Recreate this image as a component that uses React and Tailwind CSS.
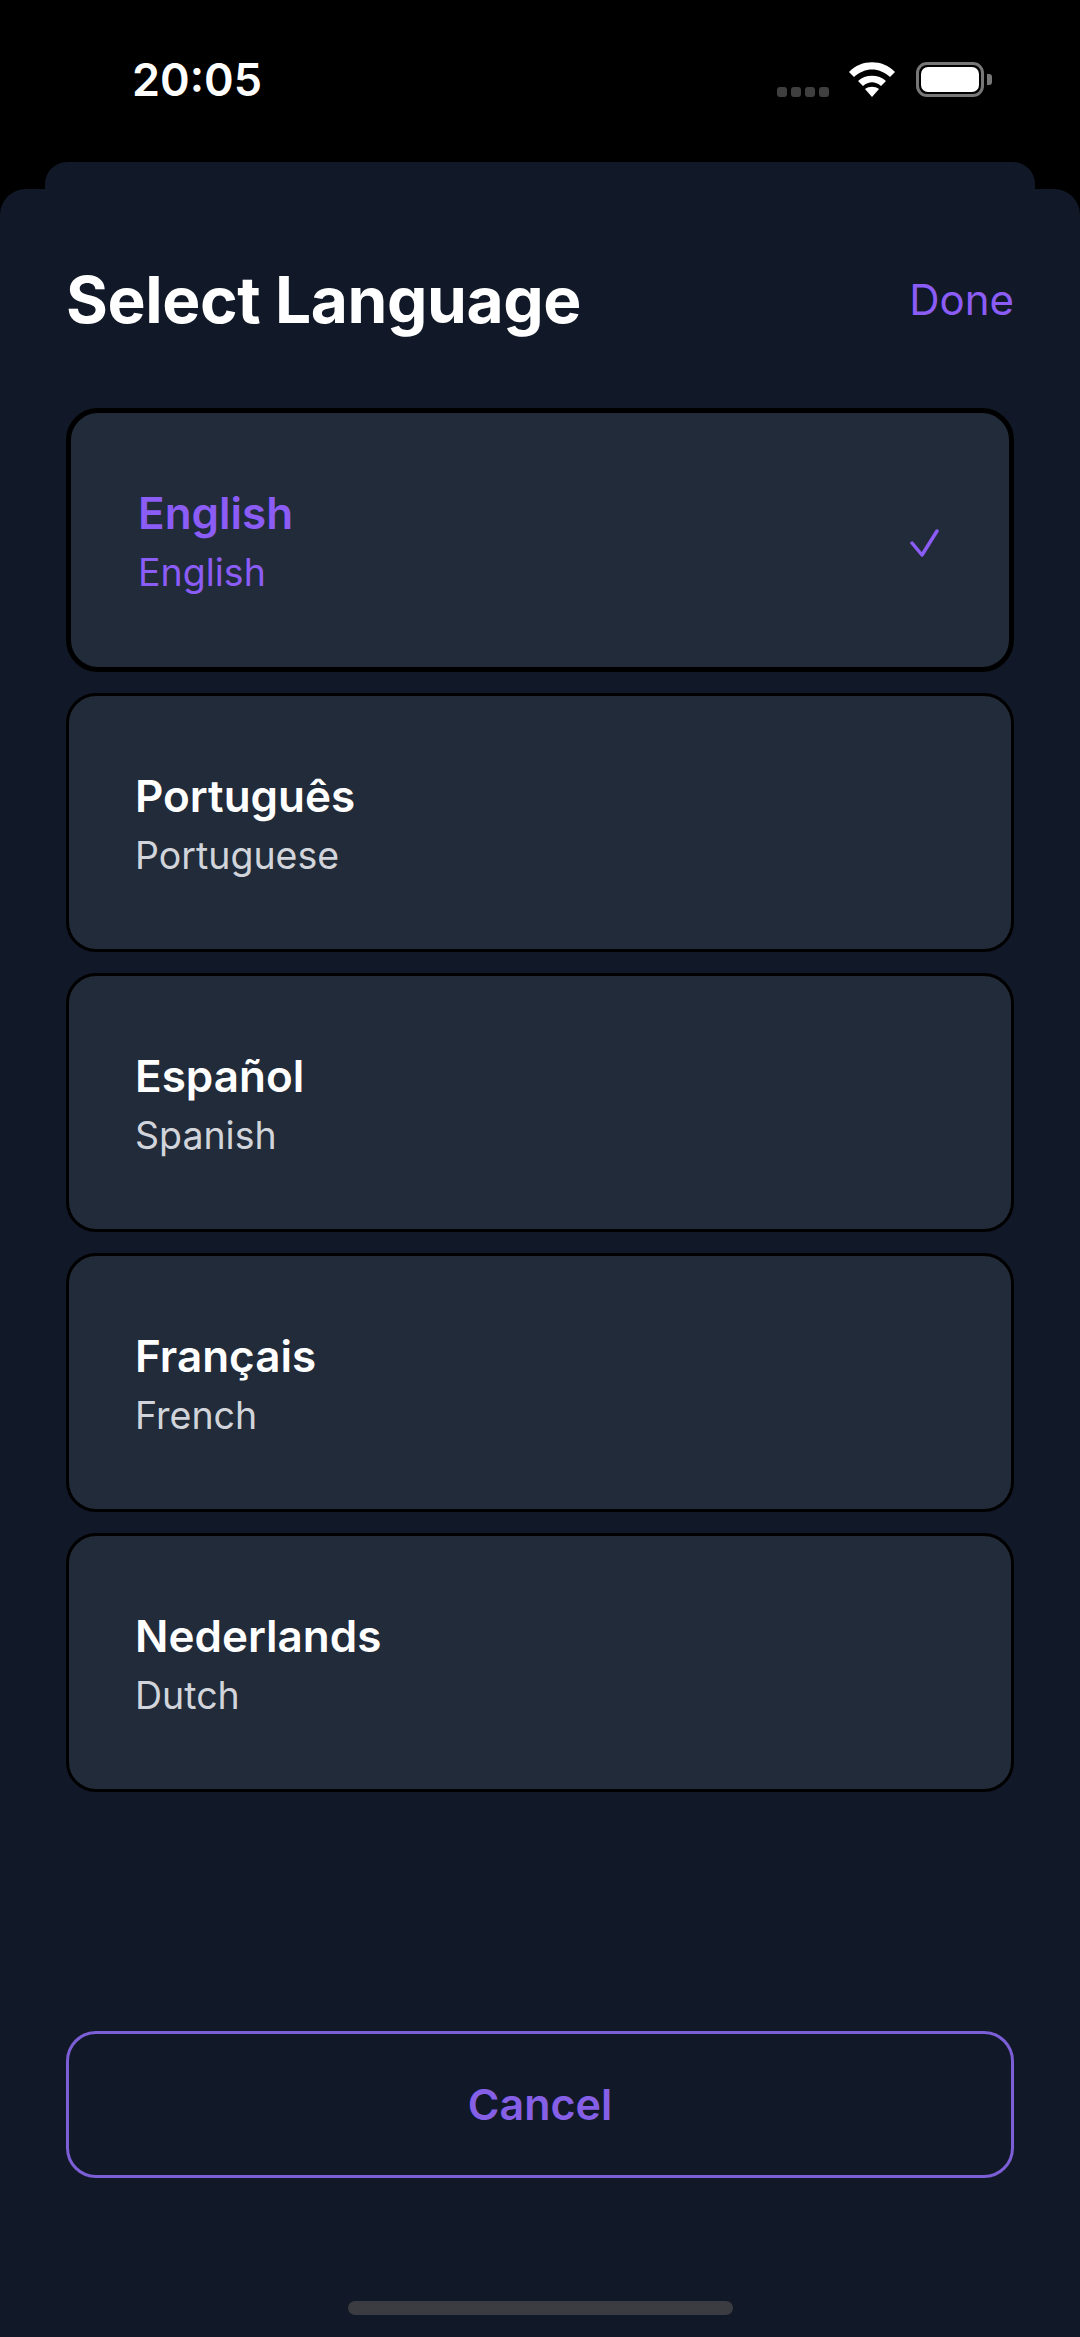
const LANGUAGES = [
  { name: "Português", sub: "Portuguese" },
  { name: "Español", sub: "Spanish" },
  { name: "Français", sub: "French" },
  { name: "Nederlands", sub: "Dutch" },
];

function StatusBar() {
  return (
    <div className="h-[162px] shrink-0 flex items-start justify-between pl-[132px] pr-[88px] pt-[55px]">
      <span className="text-[45px] leading-[50px] font-semibold text-white">20:05</span>
      <div className="flex items-end mt-[7px]">
        <div className="flex gap-[4px] mr-[20px]">
          <div className="w-[10px] h-[10px] rounded-[3px] bg-[#3f3f3f]"></div>
          <div className="w-[10px] h-[10px] rounded-[3px] bg-[#3f3f3f]"></div>
          <div className="w-[10px] h-[10px] rounded-[3px] bg-[#3f3f3f]"></div>
          <div className="w-[10px] h-[10px] rounded-[3px] bg-[#3f3f3f]"></div>
        </div>
        <svg width="46" height="35" viewBox="0 0 46 35" className="mr-[21px]">
          <path d="M0 10 C12 -3 34 -3 46 10 L41 15 C30 5 16 5 5 15 Z" fill="#fff" />
          <path d="M9 19 C16 12 30 12 37 19 L32 24 C26 19 20 19 14 24 Z" fill="#fff" />
          <path d="M16 27 C20 24 26 24 30 27 L23 35 Z" fill="#fff" />
        </svg>
        <div className="w-[68px] h-[35px] rounded-[11px] border-[3px] border-[#777] p-[2px]">
          <div className="w-full h-full rounded-[7px] bg-white"></div>
        </div>
        <div className="w-[5px] h-[11px] ml-[3px] mb-[12px] rounded-r-[3px] bg-[#777]"></div>
      </div>
    </div>
  );
}

function LanguageCard({ name, sub }) {
  return (
    <button className="w-full h-[259px] flex flex-col justify-center items-start pl-[66px] pt-[6px] rounded-[30px] border-[3px] border-black bg-[#212b39] text-left">
      <span className="text-[44px] leading-[60px] font-semibold text-white">{name}</span>
      <span className="text-[37.5px] leading-[60px] text-[#d1d5db]">{sub}</span>
    </button>
  );
}

export default function App() {
  return (
    <div className="w-[1080px] h-[2337px] bg-black flex flex-col overflow-hidden font-['Inter',sans-serif]">
      <StatusBar />
      <div className="h-[27px] shrink-0 mx-[45px] rounded-t-[22px] bg-[#111827]"></div>

      <div className="flex-1 flex flex-col rounded-t-[26px] bg-[#111827] px-[66px]">
        {/* HEADER */}
        <div className="flex items-center justify-between h-[219px] pt-[62px] pb-[60px]">
          <h1 className="text-[64px] leading-[76px] font-bold tracking-[-0.4px] text-white">Select Language</h1>
          <button className="text-[42px] text-[#8b5cf6]">Done</button>
        </div>

        {/* LIST */}
        <div className="flex flex-col gap-[21px]">
          <button className="w-full h-[264px] flex items-center justify-between pl-[67px] pr-[70px] pt-[6px] rounded-[32px] border-[5px] border-black bg-[#212b39] text-left">
            <div className="flex flex-col">
              <span className="text-[44px] leading-[60px] font-semibold text-[#8b5cf6]">English</span>
              <span className="text-[37.5px] leading-[60px] text-[#8b5cf6]">English</span>
            </div>
            <svg width="29" height="28" viewBox="0 0 29 28" fill="none" stroke="#8b5cf6" strokeWidth="3.5" strokeLinecap="round" strokeLinejoin="round">
              <path d="M2 14 L12 26 L27 2" />
            </svg>
          </button>
          {LANGUAGES.map((lang) => (
            <LanguageCard key={lang.name} name={lang.name} sub={lang.sub} />
          ))}
        </div>

        {/* CANCEL */}
        <button className="w-full h-[147px] mt-[239px] rounded-[30px] border-[3px] border-[#7c5fd6] text-[43px] font-semibold text-[#8560e6]">
          Cancel
        </button>

        <div className="w-[385px] h-[14px] mt-[123px] mx-auto rounded-full bg-[#3a3c42]"></div>
      </div>
    </div>
  );
}
